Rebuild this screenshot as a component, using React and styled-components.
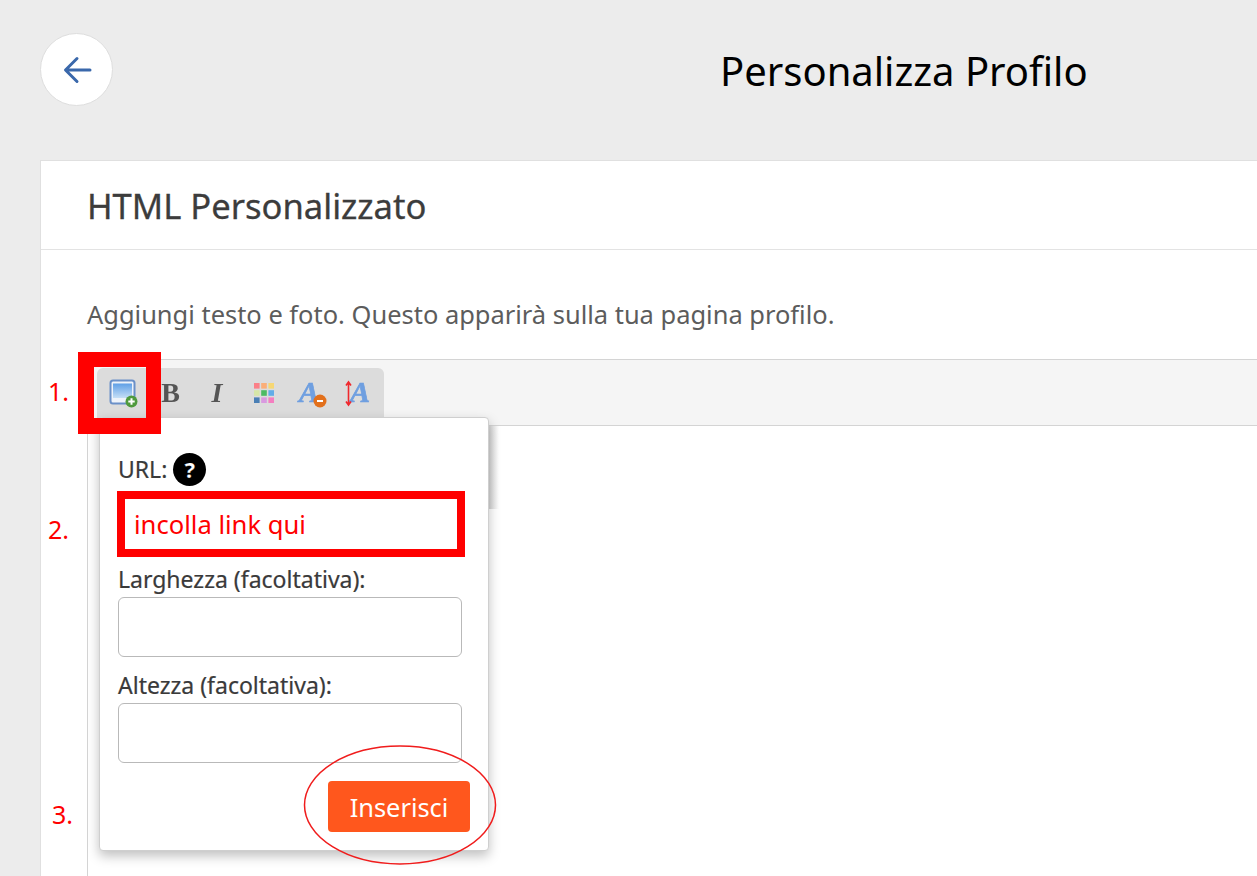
import React from "react";
import styled, { createGlobalStyle } from "styled-components";

const Global = createGlobalStyle`
  html, body {
    margin: 0;
    padding: 0;
    height: 876px;
    overflow: hidden;
    background: #ececec;
    font-family: "Noto Sans", sans-serif;
  }
  * { box-sizing: border-box; }
`;

const Page = styled.div`
  position: relative;
  width: 1257px;
  height: 876px;
  padding-left: 40px;
  overflow: hidden;
`;

const Header = styled.header`
  display: flex;
  align-items: flex-start;
  height: 160px;
  padding-top: 33px;
`;

const BackButton = styled.button`
  display: flex;
  align-items: center;
  justify-content: center;
  width: 73px;
  height: 73px;
  padding: 0;
  background: #fff;
  border: 1px solid #dedede;
  border-radius: 50%;
`;

const PageTitle = styled.h1`
  margin: 9px 0 0 607px;
  font-size: 40px;
  line-height: 58px;
  font-weight: 400;
  color: #000;
  white-space: nowrap;
`;

const Card = styled.section`
  width: 1240px;
  height: 740px;
  background: #fff;
  border: 1px solid #e0e0e0;
  border-right: 0;
`;

const CardHead = styled.div`
  height: 89px;
  padding: 1px 46px 0;
  display: flex;
  align-items: center;
  border-bottom: 1px solid #e3e3e3;
`;

const CardTitle = styled.h2`
  margin: 0;
  font-size: 34.6px;
  font-weight: 400;
  color: #3c3c3c;
  -webkit-text-stroke: 0.3px #3c3c3c;
`;

const Hint = styled.p`
  margin: 0;
  padding: 44px 0 0 46px;
  height: 109px;
  font-size: 25.46px;
  line-height: 40px;
  color: #5c5c5c;
`;

const Editor = styled.div`
  margin-left: 46px;
  height: 600px;
  border: 1px solid #d4d4d4;
  border-right: 0;
`;

const ToolbarBar = styled.div`
  height: 66px;
  padding: 8px 0 0 9px;
  background: #f5f5f5;
  border-bottom: 1px solid #d4d4d4;
`;

const ToolGroup = styled.div`
  display: flex;
  align-items: center;
  width: 287px;
  height: 50px;
  background: #dcdcdc;
  border-radius: 6px 6px 0 0;
  padding-left: 3px;
`;

const Tool = styled.span`
  display: flex;
  align-items: center;
  justify-content: center;
  width: ${(p) => p.$w}px;
  height: 34px;
  filter: blur(0.5px);
`;

const Letter = styled.span`
  font-family: "Liberation Serif", serif;
  font-size: 28px;
  line-height: 34px;
  font-weight: 700;
  font-style: ${(p) => (p.$italic ? "italic" : "normal")};
  color: #555;
`;

const Popup = styled.div`
  position: absolute;
  left: 99px;
  top: 417px;
  width: 390px;
  height: 434px;
  padding: 31px 26px 0 18px;
  background: #fff;
  border: 1px solid #cfcfcf;
  border-radius: 4px;
  box-shadow: 0 5px 12px rgba(0, 0, 0, 0.25);
`;

const ShadowStrip = styled.div`
  position: absolute;
  left: 489px;
  top: 426px;
  width: 10px;
  height: 83px;
  background: linear-gradient(90deg, #d4d4d4, #ffffff);
`;

const Label = styled.label`
  display: flex;
  align-items: center;
  gap: 6px;
  height: ${(p) => p.$h}px;
  padding-bottom: ${(p) => p.$lift || 0}px;
  font-size: 23px;
  font-weight: 400;
  color: #3a3a3a;
  -webkit-text-stroke: 0.2px #3a3a3a;
  white-space: nowrap;
`;

const Help = styled.span`
  display: flex;
  align-items: center;
  justify-content: center;
  width: 33px;
  height: 33px;
  border-radius: 50%;
  background: #000;
  color: #fff;
  font-size: 22px;
  font-weight: 700;
`;

const UrlBox = styled.div`
  display: flex;
  align-items: center;
  width: 348px;
  height: 66px;
  margin: 2px 0 6px -1px;
  padding-left: 9px;
  border: 8px solid #ff0000;
  color: #ff0000;
  font-size: 25.6px;
`;

const Field = styled.div`
  width: 344px;
  height: 60px;
  margin-bottom: 12px;
  border: 1px solid #b9b9b9;
  border-radius: 6px;
`;

const Actions = styled.div`
  display: flex;
  justify-content: flex-end;
  margin: 18px -8px 0 0;
`;

const Insert = styled.button`
  width: 142px;
  height: 51px;
  border: 0;
  border-radius: 4px;
  background: #ff571d;
  color: #fff;
  font-family: inherit;
  font-size: 25.4px;
`;

const Marker = styled.div`
  position: absolute;
  left: ${(p) => p.$x}px;
  top: ${(p) => p.$y}px;
  color: #ff0000;
  font-size: 25px;
  line-height: 32px;
`;

const RedFrame = styled.div`
  position: absolute;
  left: 78px;
  top: 352px;
  width: 83px;
  height: 82px;
  border: solid #ff0000;
  border-width: 15px 15px 16px 16px;
`;

const Ellipse = styled.svg`
  position: absolute;
  left: 303px;
  top: 745px;
`;

const Arrow = () => (
  <svg width="32" height="32" viewBox="0 0 32 32" fill="none" stroke="#3a68ab" strokeWidth="3" strokeLinecap="round" strokeLinejoin="round">
    <path d="M29 16H5M16 4.5L4.5 16L16 27.5" />
  </svg>
);

const ImageIcon = () => (
  <svg width="30" height="30" viewBox="0 0 30 30">
    <defs>
      <linearGradient id="sky" x1="0" y1="0" x2="0" y2="1">
        <stop offset="0" stopColor="#5f9fe6" />
        <stop offset="1" stopColor="#c6dff6" />
      </linearGradient>
    </defs>
    <rect x="1.5" y="2.5" width="24" height="23" rx="2.5" fill="#eef3fa" stroke="#6a90c8" strokeWidth="2" />
    <rect x="4" y="5.5" width="19" height="14.5" fill="url(#sky)" />
    <circle cx="22.5" cy="23.5" r="6" fill="#4f9a3d" />
    <path d="M22.5 20.3v6.4M19.3 23.5h6.4" stroke="#fff" strokeWidth="2" />
  </svg>
);

const swatches = ["#fb8088", "#fbae78", "#f6d774", "#d6e6a8", "#4cbb63", "#62ade8", "#4a7fb5", "#d99ae0", "#f47fc0"];

const PaletteIcon = () => (
  <svg width="22" height="22" viewBox="0 0 22 22">
    {swatches.map((c, i) => (
      <rect key={c} x={1 + (i % 3) * 7.2} y={1 + Math.floor(i / 3) * 7.2} width="5.6" height="5.6" fill={c} />
    ))}
  </svg>
);

const AGlyph = ({ x }) => (
  <text x={x} y="26" fontFamily="Liberation Serif" fontSize="30" fontWeight="700" fontStyle="italic" fill="#6f9fe0" stroke="#6f9fe0" strokeWidth="0.7">
    A
  </text>
);

const ClearIcon = () => (
  <svg width="38" height="34" viewBox="0 0 38 34">
    <AGlyph x="6" />
    <circle cx="27" cy="25" r="6.5" fill="#e2701c" />
    <path d="M24 25h6" stroke="#fff" strokeWidth="2" />
  </svg>
);

const HeightIcon = () => (
  <svg width="34" height="34" viewBox="0 0 34 34">
    <AGlyph x="9" />
    <path d="M7.5 6.5v22M5 9.5L7.5 6L10 9.5M5 25.5L7.5 29L10 25.5" fill="none" stroke="#f0282d" strokeWidth="1.6" />
  </svg>
);

export default function App() {
  return (
    <>
      <Global />
      <Page>
        <Header>
          <BackButton>
            <Arrow />
          </BackButton>
          <PageTitle>Personalizza Profilo</PageTitle>
        </Header>
        <Card>
          <CardHead>
            <CardTitle>HTML Personalizzato</CardTitle>
          </CardHead>
          <Hint>Aggiungi testo e foto. Questo apparirà sulla tua pagina profilo.</Hint>
          <Editor>
            <ToolbarBar>
              <ToolGroup>
                <Tool $w={47}><ImageIcon /></Tool>
                <Tool $w={47}><Letter>B</Letter></Tool>
                <Tool $w={46}><Letter $italic>I</Letter></Tool>
                <Tool $w={47}><PaletteIcon /></Tool>
                <Tool $w={50}><ClearIcon /></Tool>
                <Tool $w={42}><HeightIcon /></Tool>
              </ToolGroup>
            </ToolbarBar>
          </Editor>
        </Card>

        <ShadowStrip />
        <Popup>
          <Label $h={40}>URL: <Help>?</Help></Label>
          <UrlBox>incolla link qui</UrlBox>
          <Label $h={34} $lift={2}>Larghezza (facoltativa):</Label>
          <Field />
          <Label $h={34} $lift={3}>Altezza (facoltativa):</Label>
          <Field />
          <Actions>
            <Insert>Inserisci</Insert>
          </Actions>
        </Popup>

        <RedFrame />
        <Ellipse width="194" height="120" viewBox="0 0 194 120" fill="none">
          <ellipse cx="97" cy="60" rx="95.5" ry="59" stroke="#f01c1c" strokeWidth="1.5" />
        </Ellipse>
        <Marker $x={48} $y={375}>1.</Marker>
        <Marker $x={48} $y={513}>2.</Marker>
        <Marker $x={52} $y={798}>3.</Marker>
      </Page>
    </>
  );
}
